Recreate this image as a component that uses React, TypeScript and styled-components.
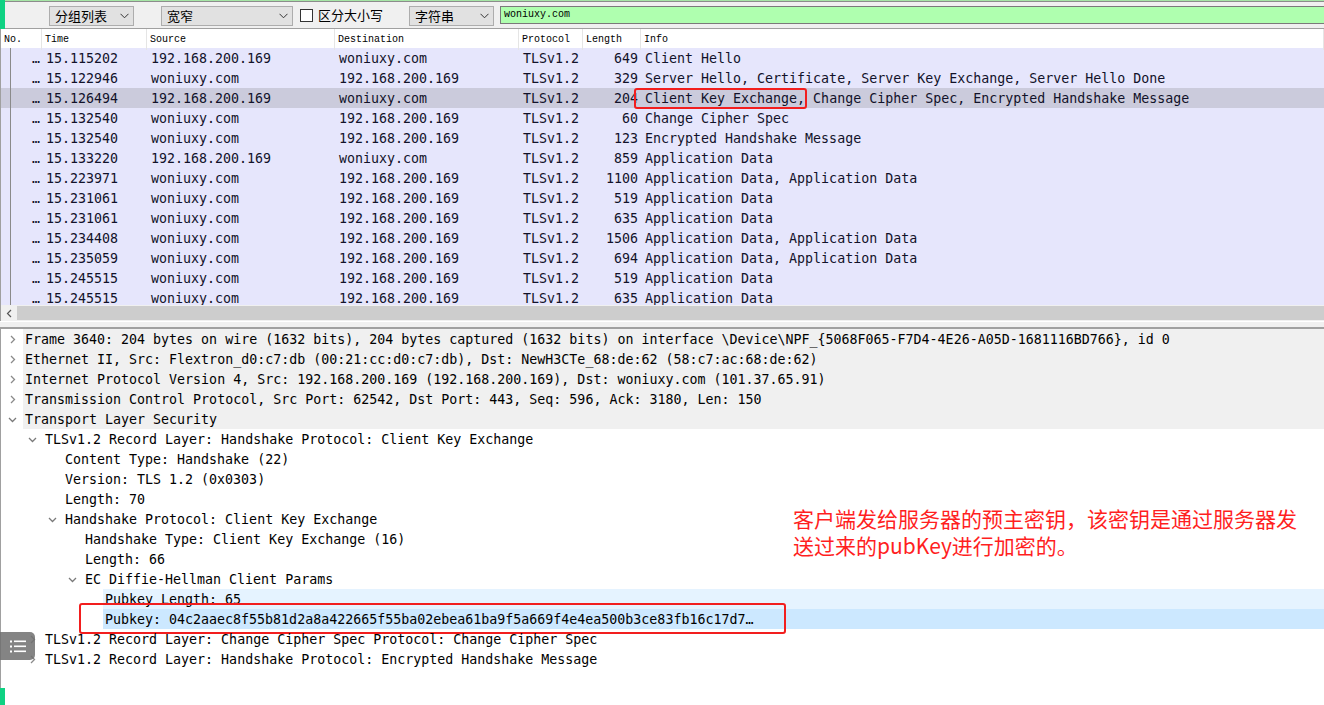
import styled, { createGlobalStyle } from "styled-components";

const GlobalStyle = createGlobalStyle`
  html, body {
    margin: 0;
    padding: 0;
    background: #ffffff;
    overflow: hidden;
  }
`;

const MONO = `"DejaVu Sans Mono", "Liberation Mono", monospace`;
const CJK = `"Noto Sans CJK SC", "Noto Sans", sans-serif`;

const Page = styled.div`
  position: relative;
  width: 1324px;
  height: 705px;
  display: flex;
  flex-direction: column;
  overflow: hidden;
  background: #ffffff;
`;

const SideMark = styled.div<{ $top: number; $height: number }>`
  position: absolute;
  left: 0;
  top: ${(p) => p.$top}px;
  width: 5px;
  height: ${(p) => p.$height}px;
  background: #0fd283;
`;

const FindBar = styled.div`
  height: 27px;
  border-top: 1px solid #a6e6a6;
  box-shadow: inset 0 1px 0 #8c8c8c;
  border-bottom: 1px solid #a0a0a0;
  background: #f0f0f0;
  display: flex;
  align-items: center;
  padding-left: 49px;
  box-sizing: content-box;
`;

const Select = styled.div<{ $w: number; $ml?: number }>`
  width: ${(p) => p.$w}px;
  margin-left: ${(p) => p.$ml ?? 0}px;
  height: 18px;
  border: 1px solid #adadad;
  background: #e1e1e1;
  display: flex;
  align-items: center;
  justify-content: space-between;
  padding: 0 4px 0 5px;
  box-sizing: content-box;
  font-family: ${CJK};
  font-size: 13px;
  color: #000;
  margin-top: 2px;
`;

const Check = styled.div`
  width: 11px;
  height: 11px;
  border: 1px solid #333;
  background: #fff;
  margin-left: 7px;
  margin-top: 1px;
`;

const CheckLabel = styled.span`
  font-family: ${CJK};
  font-size: 13px;
  color: #000;
  margin-left: 5px;
  width: 86px;
`;

const FilterInput = styled.div`
  flex: 1;
  margin-left: 6px;
  height: 16px;
  border: 1px solid #7a7a7a;
  border-right: none;
  background: #afffaf;
  font-family: "Liberation Mono", monospace;
  font-size: 10px;
  line-height: 16px;
  padding-left: 3px;
  color: #000;
  margin-top: 1px;
`;

const Chevron = () => (
  <svg width="9" height="6" viewBox="0 0 9 6">
    <path d="M0.5 0.8 L4.5 4.8 L8.5 0.8" fill="none" stroke="#333" strokeWidth="1" />
  </svg>
);

const COLS = "41px 105px 188px 184px 64px 58px 1fr";

const ListPane = styled.div`
  height: 276px;
  overflow: hidden;
  border-left: 1px solid #a0a0a0;
`;

const HeaderRow = styled.div`
  display: grid;
  grid-template-columns: ${COLS};
  height: 19px;
  background: #fff;
  font-family: "Liberation Mono", monospace;
  font-size: 10px;
  color: #000;
`;

const HeaderCell = styled.div`
  border-right: 1px solid #e5e5e5;
  padding-left: 3px;
  line-height: 21px;
  white-space: nowrap;
`;

const PacketRow = styled.div<{ $selected?: boolean }>`
  display: grid;
  grid-template-columns: ${COLS};
  height: 20px;
  line-height: 22px;
  background: ${(p) => (p.$selected ? "#cbcbdc" : "#e6e6fc")};
  font-family: ${MONO};
  font-size: 13.3px;
  color: #12122a;
  white-space: nowrap;
`;

const Cell = styled.div<{ $right?: boolean }>`
  position: relative;
  height: 20px;
  padding: ${(p) => (p.$right ? "0 3px 0 0" : "0 0 0 4px")};
  text-align: ${(p) => (p.$right ? "right" : "left")};
`;

const NoCell = styled.div`
  position: relative;
  height: 20px;
  text-align: right;
  padding-right: 2px;
  &::before {
    content: "";
    position: absolute;
    left: 9px;
    top: 0;
    bottom: 0;
    width: 1px;
    background: #8a8a8a;
  }
`;

const Marked = styled.span`
  position: relative;
  &::after {
    content: "";
    position: absolute;
    left: -11px;
    right: -2px;
    top: -3px;
    bottom: -3px;
    border: 2px solid #f21e1e;
    border-radius: 3px;
  }
`;

const HScroll = styled.div`
  height: 16px;
  background: #f0f0f0;
  border-left: 1px solid #a0a0a0;
  display: flex;
  align-items: stretch;
`;

const ScrollArrow = styled.div`
  width: 16px;
  display: flex;
  align-items: center;
  justify-content: center;
`;

const ScrollTrack = styled.div`
  flex: 1;
  display: flex;
  padding: 1px 0;
`;

const ScrollThumb = styled.div<{ $left: number }>`
  margin-left: ${(p) => p.$left}px;
  flex: 1;
  background: #cdcdcd;
`;

const Splitter = styled.div`
  height: 5px;
  background: #f0f0f0;
  border-top: 1px solid #ffffff;
  border-bottom: 2px solid #a0a0a0;
`;

const DetailPane = styled.div`
  flex: 1;
  border-left: 1px solid #a0a0a0;
  font-family: ${MONO};
  font-size: 13.3px;
  color: #000;
  background: #fff;
`;

const TreeRow = styled.div`
  position: relative;
  display: flex;
  height: 20px;
  line-height: 22px;
  white-space: nowrap;
`;

const Indent = styled.div<{ $level: number }>`
  width: ${(p) => p.$level * 20}px;
  flex: none;
`;

const Expander = styled.div`
  width: 22px;
  flex: none;
  display: flex;
  align-items: center;
  justify-content: center;
`;

const Label = styled.div<{ $bg: string }>`
  flex: 1;
  height: 20px;
  padding-left: 2px;
  background: ${(p) => p.$bg};
`;

const PubkeyBox = styled.div`
  position: absolute;
  left: 78px;
  top: -6px;
  width: 703px;
  height: 27px;
  border: 2px solid #f21e1e;
  border-radius: 3px;
  pointer-events: none;
`;

const Note = styled.div`
  position: absolute;
  left: 793px;
  top: 505px;
  font-family: ${CJK};
  font-size: 21px;
  color: #ff1f1f;
  white-space: nowrap;
`;

const NoteLine = styled.div`
  height: 27px;
  line-height: 27px;
`;

const FloatButton = styled.div`
  position: absolute;
  left: 0;
  top: 632px;
  width: 35px;
  height: 28px;
  background: rgba(110, 110, 110, 0.85);
  border-radius: 0 5px 5px 0;
  display: flex;
  align-items: center;
  justify-content: center;
`;

type Packet = [string, string, string, number, string];

const packets: Packet[] = [
  ["15.115202", "192.168.200.169", "woniuxy.com", 649, "Client Hello"],
  ["15.122946", "woniuxy.com", "192.168.200.169", 329, "Server Hello, Certificate, Server Key Exchange, Server Hello Done"],
  ["15.126494", "192.168.200.169", "woniuxy.com", 204, "Client Key Exchange, Change Cipher Spec, Encrypted Handshake Message"],
  ["15.132540", "woniuxy.com", "192.168.200.169", 60, "Change Cipher Spec"],
  ["15.132540", "woniuxy.com", "192.168.200.169", 123, "Encrypted Handshake Message"],
  ["15.133220", "192.168.200.169", "woniuxy.com", 859, "Application Data"],
  ["15.223971", "woniuxy.com", "192.168.200.169", 1100, "Application Data, Application Data"],
  ["15.231061", "woniuxy.com", "192.168.200.169", 519, "Application Data"],
  ["15.231061", "woniuxy.com", "192.168.200.169", 635, "Application Data"],
  ["15.234408", "woniuxy.com", "192.168.200.169", 1506, "Application Data, Application Data"],
  ["15.235059", "woniuxy.com", "192.168.200.169", 694, "Application Data, Application Data"],
  ["15.245515", "woniuxy.com", "192.168.200.169", 519, "Application Data"],
  ["15.245515", "woniuxy.com", "192.168.200.169", 635, "Application Data"],
];

type Node = {
  level: number;
  text: string;
  arrow?: "open" | "closed";
  bg?: string;
  boxed?: boolean;
};

const tree: Node[] = [
  { level: 0, arrow: "closed", bg: "#f0f0f0", text: "Frame 3640: 204 bytes on wire (1632 bits), 204 bytes captured (1632 bits) on interface \\Device\\NPF_{5068F065-F7D4-4E26-A05D-1681116BD766}, id 0" },
  { level: 0, arrow: "closed", bg: "#f0f0f0", text: "Ethernet II, Src: Flextron_d0:c7:db (00:21:cc:d0:c7:db), Dst: NewH3CTe_68:de:62 (58:c7:ac:68:de:62)" },
  { level: 0, arrow: "closed", bg: "#f0f0f0", text: "Internet Protocol Version 4, Src: 192.168.200.169 (192.168.200.169), Dst: woniuxy.com (101.37.65.91)" },
  { level: 0, arrow: "closed", bg: "#f0f0f0", text: "Transmission Control Protocol, Src Port: 62542, Dst Port: 443, Seq: 596, Ack: 3180, Len: 150" },
  { level: 0, arrow: "open", bg: "#f0f0f0", text: "Transport Layer Security" },
  { level: 1, arrow: "open", text: "TLSv1.2 Record Layer: Handshake Protocol: Client Key Exchange" },
  { level: 2, text: "Content Type: Handshake (22)" },
  { level: 2, text: "Version: TLS 1.2 (0x0303)" },
  { level: 2, text: "Length: 70" },
  { level: 2, arrow: "open", text: "Handshake Protocol: Client Key Exchange" },
  { level: 3, text: "Handshake Type: Client Key Exchange (16)" },
  { level: 3, text: "Length: 66" },
  { level: 3, arrow: "open", text: "EC Diffie-Hellman Client Params" },
  { level: 4, bg: "#e5f3ff", text: "Pubkey Length: 65" },
  { level: 4, bg: "#cce8ff", boxed: true, text: "Pubkey: 04c2aaec8f55b81d2a8a422665f55ba02ebea61ba9f5a669f4e4ea500b3ce83fb16c17d7…" },
  { level: 1, arrow: "closed", text: "TLSv1.2 Record Layer: Change Cipher Spec Protocol: Change Cipher Spec" },
  { level: 1, arrow: "closed", text: "TLSv1.2 Record Layer: Handshake Protocol: Encrypted Handshake Message" },
];

const Arrow = ({ open }: { open: boolean }) =>
  open ? (
    <svg width="9" height="9" viewBox="0 0 9 9">
      <path d="M1 3 L4.5 6.5 L8 3" fill="none" stroke="#7a7a7a" strokeWidth="1.3" />
    </svg>
  ) : (
    <svg width="9" height="9" viewBox="0 0 9 9">
      <path d="M3 1 L6.5 4.5 L3 8" fill="none" stroke="#8a8a8a" strokeWidth="1.3" />
    </svg>
  );

function renderInfo(info: string, i: number) {
  if (i !== 2) return info;
  const head = "Client Key Exchange,";
  return (
    <>
      <Marked>{head}</Marked>
      {info.slice(head.length)}
    </>
  );
}

function App() {
  return (
    <Page>
      <GlobalStyle />
      <FindBar>
        <Select $w={74}>
          <span>分组列表</span>
          <Chevron />
        </Select>
        <Select $w={121} $ml={27}>
          <span>宽窄</span>
          <Chevron />
        </Select>
        <Check />
        <CheckLabel>区分大小写</CheckLabel>
        <Select $w={74} $ml={5}>
          <span>字符串</span>
          <Chevron />
        </Select>
        <FilterInput>woniuxy.com</FilterInput>
      </FindBar>

      <ListPane>
        <HeaderRow>
          <HeaderCell>No.</HeaderCell>
          <HeaderCell>Time</HeaderCell>
          <HeaderCell>Source</HeaderCell>
          <HeaderCell>Destination</HeaderCell>
          <HeaderCell>Protocol</HeaderCell>
          <HeaderCell>Length</HeaderCell>
          <HeaderCell>Info</HeaderCell>
        </HeaderRow>
        {packets.map(([time, src, dst, len, info], i) => (
          <PacketRow key={i} $selected={i === 2}>
            <NoCell>…</NoCell>
            <Cell>{time}</Cell>
            <Cell>{src}</Cell>
            <Cell>{dst}</Cell>
            <Cell>TLSv1.2</Cell>
            <Cell $right>{len}</Cell>
            <Cell>{renderInfo(info, i)}</Cell>
          </PacketRow>
        ))}
      </ListPane>

      <HScroll>
        <ScrollArrow>
          <svg width="6" height="9" viewBox="0 0 6 9">
            <path d="M5 1 L1.5 4.5 L5 8" fill="none" stroke="#555" strokeWidth="1.2" />
          </svg>
        </ScrollArrow>
        <ScrollTrack>
          <ScrollThumb $left={0} />
        </ScrollTrack>
      </HScroll>
      <Splitter />

      <DetailPane>
        {tree.map((n, i) => (
          <TreeRow key={i}>
            <Indent $level={n.level} />
            <Expander>{n.arrow && <Arrow open={n.arrow === "open"} />}</Expander>
            <Label $bg={n.bg ?? "transparent"}>{n.text}</Label>
            {n.boxed && <PubkeyBox />}
          </TreeRow>
        ))}
      </DetailPane>

      <Note>
        <NoteLine>客户端发给服务器的预主密钥，该密钥是通过服务器发</NoteLine>
        <NoteLine>送过来的pubKey进行加密的。</NoteLine>
      </Note>

      <FloatButton>
        <svg width="18" height="15" viewBox="0 0 18 15">
          <g fill="#ffffff">
            <rect x="1" y="1.5" width="2" height="2" />
            <rect x="5" y="1.5" width="12" height="1.6" />
            <rect x="1" y="6.5" width="2" height="2" />
            <rect x="5" y="6.5" width="12" height="1.6" />
            <rect x="1" y="11.5" width="2" height="2" />
            <rect x="5" y="11.5" width="12" height="1.6" />
          </g>
        </svg>
      </FloatButton>

      <SideMark $top={0} $height={29} />
      <SideMark $top={688} $height={17} />
    </Page>
  );
}

export default App;
